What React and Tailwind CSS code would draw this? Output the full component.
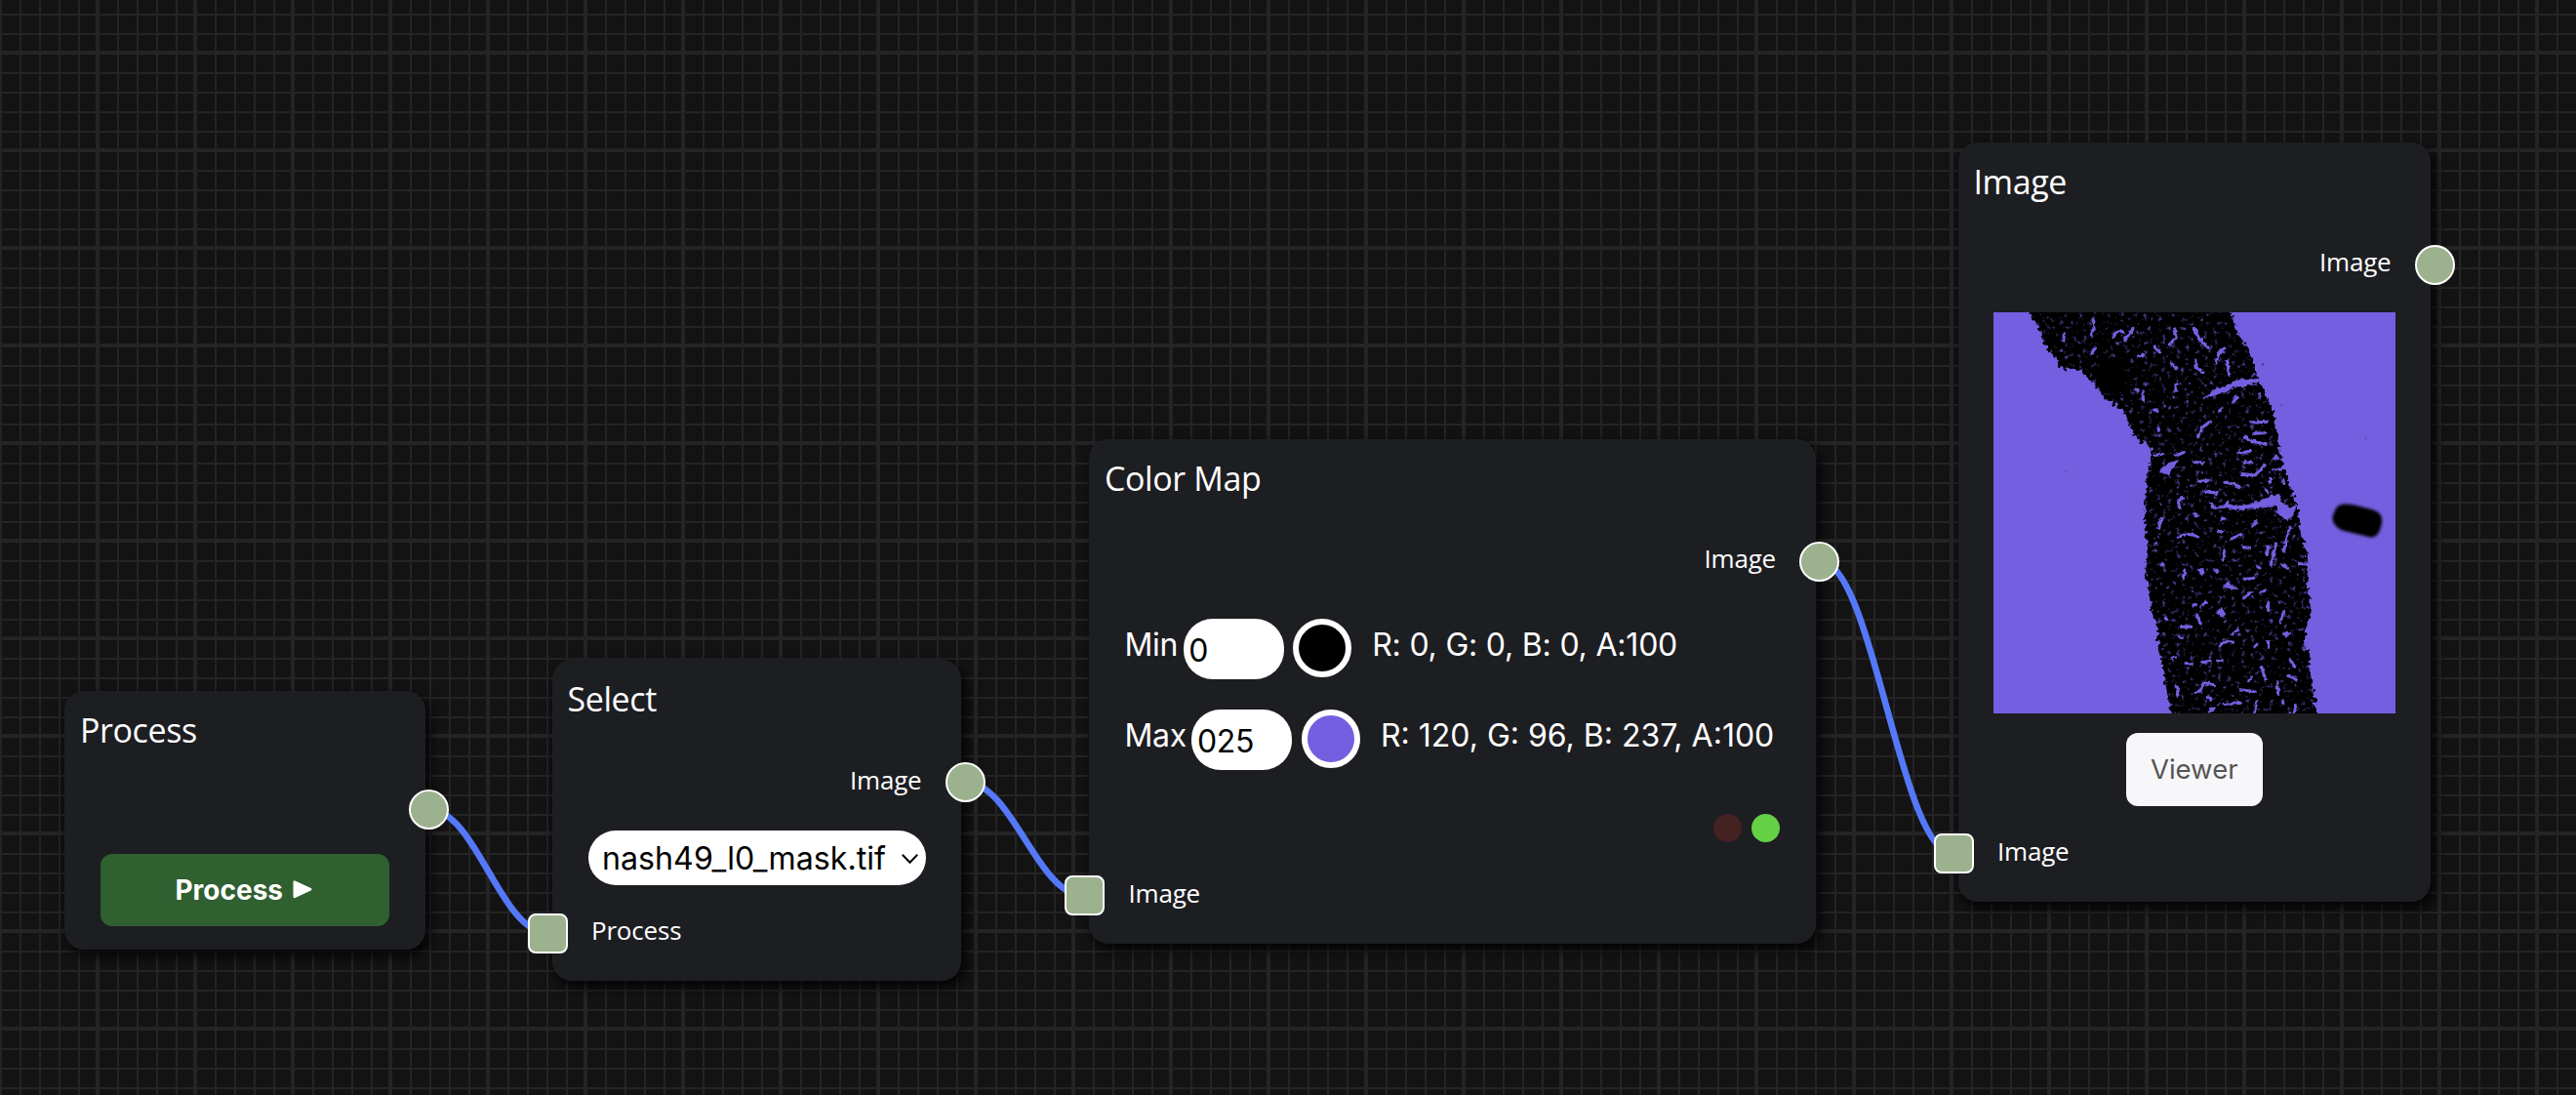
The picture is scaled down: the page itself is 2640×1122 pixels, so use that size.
import React from "react";

const UI = "font-['Inter','Liberation_Sans',sans-serif]";

function Socket({ side }) {
  return (
    <span
      className={
        side === "out"
          ? "relative z-20 block size-[41px] shrink-0 rounded-full border-2 border-white bg-[#9cb18e]"
          : "relative z-20 block size-[41px] shrink-0 rounded-lg border-2 border-white bg-[#9cb18e]"
      }
    />
  );
}

function Output({ label }) {
  return (
    <div className="-mr-[24.5px] flex h-[41px] shrink-0 items-center justify-end gap-[24px]">
      {label && <span className="-mt-[6px] text-[26px] leading-[36px] tracking-[-0.2px] text-white">{label}</span>}
      <Socket side="out" />
    </div>
  );
}

function Input({ label }) {
  return (
    <div className="-ml-[25px] flex h-[41px] shrink-0 items-center gap-[24.5px]">
      <Socket side="in" />
      <span className="-mt-[6px] text-[26px] leading-[36px] tracking-[-0.2px] text-white">{label}</span>
    </div>
  );
}

function Node({ title, className, children }) {
  return (
    <section
      className={
        "absolute flex flex-col rounded-[20px] bg-[#1d1e22] font-['Open_Sans',sans-serif] shadow-[4px_6px_14px_rgba(0,0,0,0.9)] " +
        className
      }
    >
      <h2 className="h-[105px] shrink-0 pt-[17px] pl-[16px] text-[34px] leading-[46px] tracking-[-0.4px] text-white">
        {title}
      </h2>
      {children}
    </section>
  );
}

function ColorRow({ name, value, swatch, text, textClass }) {
  return (
    <div className={"flex h-[62px] items-start text-[32px] leading-[53px] text-white " + UI}>
      <span className="tracking-[-0.3px]">{name}</span>
      <span className="ml-[5.5px] h-[62px] w-[103px] rounded-[30px] bg-white pl-[5.5px] leading-[65px] tracking-[-0.3px] text-black">
        {value}
      </span>
      <span className={"ml-[9.5px] size-[60px] rounded-full border-[6px] border-white " + swatch} />
      <span className={"ml-[21px] whitespace-pre " + textClass}>{text}</span>
    </div>
  );
}

const TISSUE =
  "M140 20L165 55L188 90L190 125L225 160L245 200L305 208L345 245L380 290L440 330L450 360L465 395L490 425L525 445L520 490L510 540L502 600L505 680L512 760L508 830L518 870L522 930L535 970L548 1000L540 1020L552 1080L565 1150L575 1210L590 1275L1034 1275L1025 1200L1012 1130L1012 1070L990 1050L1000 1010L1010 980L1015 935L1005 880L1010 820L1000 760L980 700L975 630L955 570L935 520L920 460L912 400L900 340L880 280L852 235L840 190L820 140L790 90L762 20Z";

const VESSELS =
  "M345 50L348 78L340 98M256 92L255 118M408 104Q420 82 440 90M468 78L444 114M352 140L340 156M598 80L600 108L580 128M655 78L672 110L700 138M750 140Q728 150 724 186M758 176L764 222M660 176L664 200L684 214M586 186L600 200M532 134L550 152M484 164L500 160M600 250L600 270M498 272L500 300M476 266L484 268M788 290L776 306M858 280L858 290M742 326L734 332M830 368L880 366M840 402L876 400M812 412L830 424L880 436M792 462L830 456M668 412L680 384L704 366M810 490L834 492M874 498L844 530L804 526M750 552L776 556L800 568M670 550L700 546M690 580L726 586M902 512L924 512M890 540L890 556M930 540L930 556M876 574L882 584M612 630Q600 606 622 600M606 720Q640 704 668 720M655 650L666 654M556 660L548 694M740 668L746 662M730 704L746 702M770 726L800 712M846 672L836 686M750 760L744 788M808 752L824 752M884 750L880 778M908 740L892 806M950 690L932 764M536 742L542 738M556 806L562 804M626 824L622 850M720 824L728 826M848 808L858 816M924 804L944 816M980 802L1010 804M810 850L840 846M810 908L832 890M862 888L872 886M884 920L884 946M932 950L920 984M568 968L572 974M664 958L676 986M616 996L648 996M790 1004L776 1018M610 1028L620 1030M738 1052Q750 1038 776 1044M848 1050L844 1058M884 1042L884 1060M588 1092L596 1090M630 1108L650 1110M680 1106L706 1102M728 1100L742 1102M952 1100L968 1118M864 1120L874 1156M944 1146L970 1158M834 1152L824 1162M660 1198L676 1192L684 1168L716 1174M598 1178L608 1186L604 1206M912 1166L914 1200M800 1190L844 1196M700 1214L708 1218M746 1234L800 1230M850 1222L842 1258M700 1256L716 1248M928 1222L930 1234M968 1240L964 1264M536 328L540 332M546 386L548 392M600 468L626 460M536 468L560 466M655 490L686 492M650 930L662 928M686 926L696 920M892 600L912 596";

const BLOBS =
  "M548 520L578 492L608 484L586 512L578 528ZM700 284L722 262L742 262L790 236L856 234L852 244L808 256L780 258L738 280L684 292ZM700 614L712 616L720 628L750 622L760 606L766 620L800 624L850 612L900 592L918 588L922 612L952 632L972 620L960 652L940 668L914 648L912 624L860 630L800 636L765 630L712 632ZM745 872L756 866L760 854L772 870L792 880L770 880ZM726 948L740 940L754 958L740 966L728 956ZM930 1012L956 1016L938 1030ZM670 820L684 816L686 832L676 836ZM896 480L910 466L916 482Z";

function Slide() {
  return (
    <svg viewBox="39 29 1235 1235" className="block size-[411.5px] shrink-0 bg-[#745fe0]">
      <defs>
        <clipPath id="tissue-clip">
          <path d={TISSUE} />
        </clipPath>
        <filter id="ragged" x="-5%" y="-5%" width="110%" height="110%">
          <feTurbulence type="fractalNoise" baseFrequency="0.07" numOctaves="2" seed="4" result="n" />
          <feDisplacementMap in="SourceGraphic" in2="n" scale="28" xChannelSelector="R" yChannelSelector="G" />
          <feGaussianBlur stdDeviation="1.6" />
        </filter>
        <filter id="vein" x="-5%" y="-5%" width="110%" height="110%">
          <feTurbulence type="fractalNoise" baseFrequency="0.08" numOctaves="2" seed="9" result="n" />
          <feDisplacementMap in="SourceGraphic" in2="n" scale="12" xChannelSelector="R" yChannelSelector="G" />
          <feGaussianBlur stdDeviation="1.6" />
        </filter>
        <filter id="speckle" x="0" y="0" width="100%" height="100%" colorInterpolationFilters="sRGB">
          <feTurbulence type="fractalNoise" baseFrequency="0.07" numOctaves="3" seed="12" />
          <feColorMatrix values="0 0 0 0 0.455  0 0 0 0 0.373  0 0 0 0 0.878  2.8 0 0 0 -1.65" />
        </filter>
        <filter id="soft" x="-20%" y="-20%" width="140%" height="140%">
          <feGaussianBlur stdDeviation="4" />
        </filter>
      </defs>
      <path d={TISSUE} fill="#000" filter="url(#ragged)" />
      <g clipPath="url(#tissue-clip)">
        <rect x="39" y="29" width="1235" height="1235" filter="url(#speckle)" />
      </g>
      <ellipse cx="400" cy="225" rx="48" ry="58" fill="#000" filter="url(#soft)" />
      <path d={VESSELS} fill="none" stroke="#745fe0" strokeWidth="9" strokeLinecap="round" filter="url(#vein)" />
      <path d={BLOBS} fill="#745fe0" stroke="#745fe0" strokeWidth="2" filter="url(#vein)" />
      <path
        d="M1104 622Q1120 616 1150 622L1206 636Q1236 646 1234 672Q1230 704 1216 716Q1204 724 1186 718L1120 702Q1100 698 1088 680Q1078 668 1084 650Q1094 626 1104 622Z"
        fill="#000"
        filter="url(#soft)"
      />
      <g fill="#3d3277" opacity="0.7">
        <circle cx="868" cy="189" r="4" />
        <circle cx="262" cy="519" r="2.5" />
        <circle cx="1184" cy="417" r="2.5" />
        <circle cx="924" cy="315" r="2.5" />
      </g>
    </svg>
  );
}

function wire(x1, y1, x2, y2) {
  const k = (x2 - x1) * 0.4;
  return `M${x1} ${y1}C${x1 + k} ${y1} ${x2 - k} ${y2} ${x2} ${y2}`;
}

const WIRES = [
  wire(439.5, 829.5, 561.5, 956),
  wire(989, 801.5, 1111.5, 918),
  wire(1865, 574.8, 2002, 875),
];

export default function App() {
  return (
    <main className="relative h-[1122px] w-[2640px] overflow-hidden bg-[#131313]">
      <svg className="absolute inset-0 size-full" width="2640" height="1122">
        <defs>
          <pattern id="minor" width="20" height="20" patternUnits="userSpaceOnUse" y="14">
            <path d="M0 0H20V2H0ZM0 0H2V20H0Z" fill="#242424" />
          </pattern>
          <pattern id="major" width="100" height="100" patternUnits="userSpaceOnUse" x="-2" y="52">
            <path d="M0 0H100V4H0ZM0 0H4V100H0Z" fill="#242424" />
          </pattern>
        </defs>
        <rect width="2640" height="1122" fill="url(#minor)" />
        <rect width="2640" height="1122" fill="url(#major)" />
      </svg>

      <Node title="Process" className="top-[708px] left-[66px] h-[265px] w-[370px]">
        <div className="-mt-1 mr-[1px]">
          <Output />
        </div>
        <button
          className={
            "mt-[25px] ml-[36.5px] flex h-[74px] w-[296.5px] items-center justify-center gap-[10px] rounded-xl bg-[#306030] pr-[2px] text-[28px] font-bold text-white " +
            UI
          }
        >
          Process
          <svg viewBox="0 0 20 19" className="mt-[-2px] h-[19px] w-5" fill="currentColor">
            <path d="M0.5 1.8Q0.5 0 2.4 0.6L18.6 8Q20.4 9.2 18.6 10.4L2.4 18Q0.5 18.8 0.5 16.8Z" />
          </svg>
        </button>
      </Node>

      <Node title="Select" className="top-[676px] left-[565.5px] h-[329px] w-[419.5px]">
        <Output label="Image" />
        <div
          className={
            "mt-[29px] ml-[37px] flex h-[55.5px] w-[346px] items-center justify-between rounded-full bg-white pt-[2px] pr-[7.5px] pl-[14.5px] text-[32.2px] text-black " +
            UI
          }
        >
          nash49_l0_mask.tif
          <svg viewBox="0 0 17 10" className="h-[10px] w-[17px]" fill="none" stroke="currentColor" strokeWidth="2">
            <path d="M0.8 0.8L8.5 8.8L16.2 0.8" />
          </svg>
        </div>
        <div className="mt-[29px]">
          <Input label="Process" />
        </div>
      </Node>

      <Node title="Color Map" className="top-[449.5px] left-[1116px] h-[517.5px] w-[744.5px]">
        <Output label="Image" />
        <div className="mt-[38.5px] ml-[36.5px] flex flex-col gap-[30.5px]">
          <ColorRow
            name="Min"
            value="0"
            swatch="bg-black"
            text="R: 0, G: 0, B: 0, A:100"
            textClass="tracking-[-0.2px]"
          />
          <ColorRow name="Max" value="025" swatch="bg-[#745fe0]" text="R: 120, G: 96, B: 237, A:100" textClass="" />
        </div>
        <div className="mt-[45.5px] mr-[36.5px] flex justify-end gap-[10px]">
          <span className="size-[29px] rounded-full bg-[#442222]" />
          <span className="size-[29px] rounded-full bg-[#63d045]" />
        </div>
        <div className="mt-[34px]">
          <Input label="Image" />
        </div>
      </Node>

      <Node title="Image" className="top-[145.5px] left-[2006.5px] h-[778.5px] w-[484.5px]">
        <Output label="Image" />
        <div className="mt-[28px] flex flex-col items-center">
          <Slide />
          <button
            className={
              "mt-[20px] h-[75px] w-[140px] rounded-xl bg-[#f7f7fa] text-[27.5px] text-[#555] " + UI
            }
          >
            Viewer
          </button>
        </div>
        <div className="mt-[28px]">
          <Input label="Image" />
        </div>
      </Node>

      <svg className="absolute inset-0 z-10 size-full" width="2640" height="1122">
        <g fill="none" stroke="#5478f8" strokeWidth="6.6">
          {WIRES.map((d) => (
            <path key={d} d={d} />
          ))}
        </g>
      </svg>
    </main>
  );
}
